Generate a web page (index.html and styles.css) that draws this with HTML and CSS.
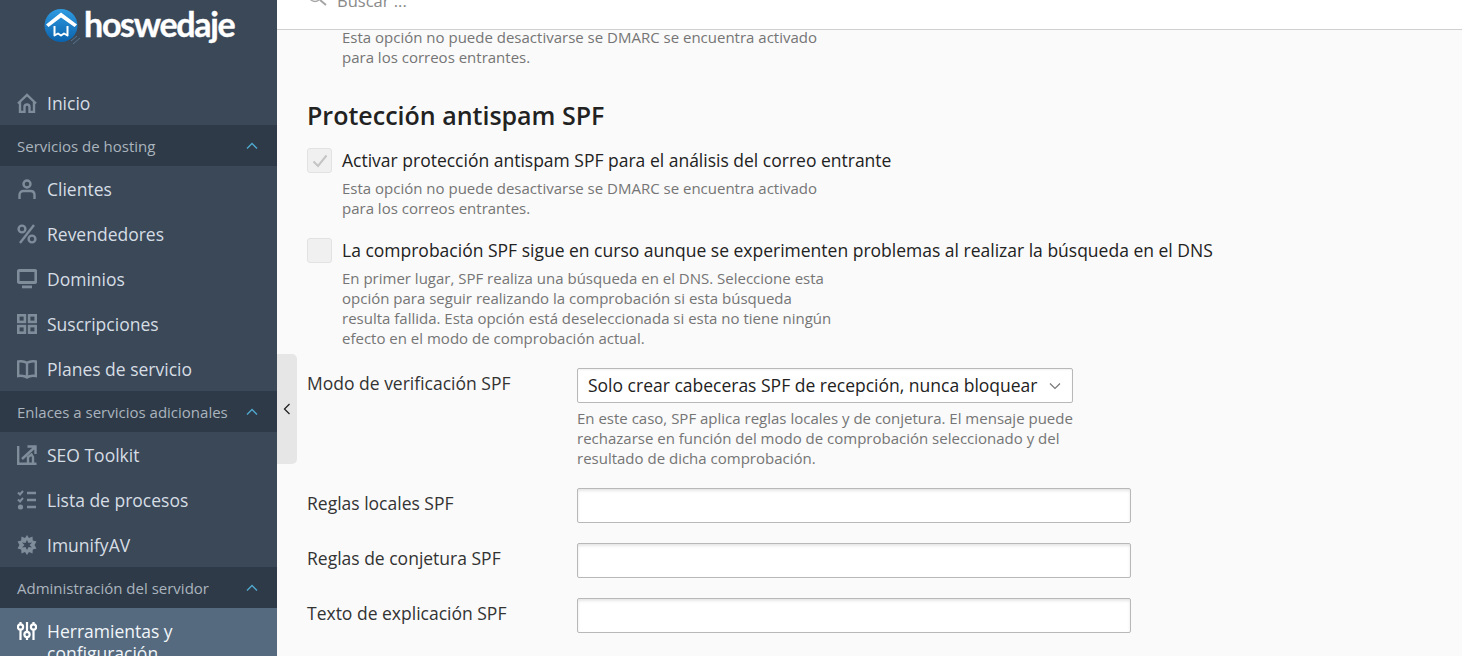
FILE: index.html
```html
<!DOCTYPE html>
<html lang="es">
<head>
  <meta charset="UTF-8" />
  <title>Protección antispam SPF - hoswedaje</title>
  <link rel="stylesheet" href="styles.css">
</head>
<body>
  <div class="container">
    <div class="sidebar">
      <div class="logo">
        <svg class="logo-mark" width="38" height="38" viewBox="0 0 38 38">
          <defs>
            <linearGradient id="logoBlue" x1="0" y1="0" x2="0" y2="1">
              <stop offset="0" stop-color="#2f9be0"/>
              <stop offset="1" stop-color="#0a62ad"/>
            </linearGradient>
          </defs>
          <circle cx="18" cy="17.5" r="16.5" fill="url(#logoBlue)"/>
          <path d="M3 16.5 L18 4.5 L34 16.5 L31.5 19 L18 9.5 L5.5 19 Z" fill="#fff"/>
          <path d="M11.5 18 V27.5 L15 25.5 L18 27.5 L21 25.5 L24.5 27.5 V18" fill="none" stroke="#fff" stroke-width="2" stroke-linejoin="round"/>
          <path d="M28 33 L34 28 M30 36 L37 30" stroke="#56748f" stroke-width="1"/>
        </svg>
        <span class="logo-text">hoswedaje</span>
      </div>
      <a href="#" class="nav-item">
        <svg viewBox="0 0 20 20" width="20" height="20"><path d="M1 10.5 L10 2 L19 10.5 M3 9 V19 H7.5 V14 A2.5 2.5 0 0 1 12.5 14 V19 H17 V9" fill="none" stroke="currentColor" stroke-width="2.4"/></svg>
        Inicio
      </a>
      <div class="nav-group">Servicios de hosting
        <svg viewBox="0 0 12 8" width="12" height="8"><path d="M1 6.5 L6 1.5 L11 6.5" fill="none" stroke="currentColor" stroke-width="1.4"/></svg>
      </div>
      <a href="#" class="nav-item">
        <svg viewBox="0 0 20 20" width="20" height="20"><circle cx="10" cy="5" r="3.5" fill="none" stroke="currentColor" stroke-width="2.4"/><path d="M2.5 20 V16 C2.5 13.5 4 12 6.5 12 H13.5 C16 12 17.5 13.5 17.5 16 V20" fill="none" stroke="currentColor" stroke-width="2.4"/></svg>
        Clientes
      </a>
      <a href="#" class="nav-item">
        <svg viewBox="0 0 20 20" width="20" height="20"><circle cx="5" cy="5" r="3.4" fill="none" stroke="currentColor" stroke-width="2.4"/><circle cx="15" cy="15" r="3.4" fill="none" stroke="currentColor" stroke-width="2.4"/><path d="M17 1 L3 19" stroke="currentColor" stroke-width="2.4"/></svg>
        Revendedores
      </a>
      <a href="#" class="nav-item">
        <svg viewBox="0 0 20 20" width="20" height="20"><rect x="1.2" y="1.5" width="17.6" height="12" rx="1" fill="none" stroke="currentColor" stroke-width="2.8"/><rect x="5" y="16.5" width="10" height="2.8" fill="currentColor"/></svg>
        Dominios
      </a>
      <a href="#" class="nav-item">
        <svg viewBox="0 0 20 20" width="20" height="20"><g fill="none" stroke="currentColor" stroke-width="2.6"><rect x="1.3" y="1.3" width="6.6" height="6.6"/><rect x="12.1" y="1.3" width="6.6" height="6.6"/><rect x="1.3" y="12.1" width="6.6" height="6.6"/><rect x="12.1" y="12.1" width="6.6" height="6.6"/></g></svg>
        Suscripciones
      </a>
      <a href="#" class="nav-item">
        <svg viewBox="0 0 20 20" width="20" height="20"><path d="M10 4 C8 2.5 4 2 1.2 2.5 V17 C4 16.5 8 17 10 18.5 C12 17 16 16.5 18.8 17 V2.5 C16 2 12 2.5 10 4 Z M10 4 V18.5" fill="none" stroke="currentColor" stroke-width="2.4"/></svg>
        Planes de servicio
      </a>
      <div class="nav-group">Enlaces a servicios adicionales
        <svg viewBox="0 0 12 8" width="12" height="8"><path d="M1 6.5 L6 1.5 L11 6.5" fill="none" stroke="currentColor" stroke-width="1.4"/></svg>
      </div>
      <a href="#" class="nav-item">
        <svg viewBox="0 0 20 20" width="20" height="20"><path d="M1.2 1 V18.8 H19.5 M5 14 L17.5 2.5 M10.5 1.5 H18.5 V9 M11 18 V12 L14.5 9.5 L16 12 V18" fill="none" stroke="currentColor" stroke-width="2.4"/></svg>
        SEO Toolkit
      </a>
      <a href="#" class="nav-item">
        <svg viewBox="0 0 20 20" width="20" height="20"><path d="M1 2.5 L3 4.5 L6 1 M1 9.5 L3 11.5 L6 8" fill="none" stroke="currentColor" stroke-width="2"/><circle cx="3.5" cy="17" r="2.6" fill="currentColor"/><path d="M10 3 H19 M10 10 H19 M10 17 H19" stroke="currentColor" stroke-width="2.4"/></svg>
        Lista de procesos
      </a>
      <a href="#" class="nav-item">
        <svg viewBox="0 0 20 20" width="20" height="20"><path d="M10 0 L12 3 L15.5 1.5 L15.8 5.5 L19.5 6.5 L17.5 10 L19.5 13.5 L15.8 14.5 L15.5 18.5 L12 17 L10 20 L8 17 L4.5 18.5 L4.2 14.5 L0.5 13.5 L2.5 10 L0.5 6.5 L4.2 5.5 L4.5 1.5 L8 3 Z" fill="currentColor"/><path d="M10 5 L11.5 8 L15 7.5 L12.5 10 L15 12.5 L11.5 12 L10 15 L8.5 12 L5 12.5 L7.5 10 L5 7.5 L8.5 8 Z" fill="#3a4858"/></svg>
        ImunifyAV
      </a>
      <div class="nav-group">Administración del servidor
        <svg viewBox="0 0 12 8" width="12" height="8"><path d="M1 6.5 L6 1.5 L11 6.5" fill="none" stroke="currentColor" stroke-width="1.4"/></svg>
      </div>
      <a href="#" class="nav-item active">
        <svg viewBox="0 0 20 20" width="20" height="20"><g fill="none" stroke="currentColor" stroke-width="2.2"><path d="M3.5 1 V3 M3.5 9 V19 M10 1 V11 M10 16.5 V19 M16.5 1 V3 M16.5 9 V19"/><circle cx="3.5" cy="6" r="2.6"/><circle cx="10" cy="13.5" r="2.6"/><circle cx="16.5" cy="6" r="2.6"/></g></svg>
        <span>Herramientas y configuración</span>
      </a>
    </div>

    <button class="collapse-tab">
      <svg viewBox="0 0 8 12" width="8" height="12"><path d="M6.5 1 L1.5 6 L6.5 11" fill="none" stroke="#222" stroke-width="1.3"/></svg>
    </button>

    <div class="main">
      <div class="topbar">
        <svg class="search-icon" viewBox="0 0 20 20" width="20" height="20"><circle cx="8" cy="6" r="6.5" fill="none" stroke="#a5a5a5" stroke-width="1.4"/><path d="M13 11 L19 16" stroke="#a5a5a5" stroke-width="2"/></svg>
        <span class="search-text">Buscar ...</span>
      </div>

      <div class="content">
        <p class="hint indent">Esta opción no puede desactivarse se DMARC se encuentra activado para los correos entrantes.</p>

        <h2>Protección antispam SPF</h2>

        <div class="check-row">
          <span class="checkbox">
            <svg viewBox="0 0 16 14" width="16" height="14"><path d="M1.5 7.5 L6 12 L14.5 1.5" fill="none" stroke="#c4c4c4" stroke-width="2"/></svg>
          </span>
          <label>Activar protección antispam SPF para el análisis del correo entrante</label>
        </div>
        <p class="hint indent">Esta opción no puede desactivarse se DMARC se encuentra activado para los correos entrantes.</p>

        <div class="check-row second">
          <span class="checkbox"></span>
          <label>La comprobación SPF sigue en curso aunque se experimenten problemas al realizar la búsqueda en el DNS</label>
        </div>
        <p class="hint indent">En primer lugar, SPF realiza una búsqueda en el DNS. Seleccione esta opción para seguir realizando la comprobación si esta búsqueda resulta fallida. Esta opción está deseleccionada si esta no tiene ningún efecto en el modo de comprobación actual.</p>

        <div class="field select-field">
          <label>Modo de verificación SPF</label>
          <div>
            <div class="select-wrap">
              <select>
                <option>Solo crear cabeceras SPF de recepción, nunca bloquear</option>
              </select>
              <svg viewBox="0 0 12 8" width="12" height="8"><path d="M1 1.5 L6 6.5 L11 1.5" fill="none" stroke="#777" stroke-width="1.2"/></svg>
            </div>
            <p class="hint">En este caso, SPF aplica reglas locales y de conjetura. El mensaje puede rechazarse en función del modo de comprobación seleccionado y del resultado de dicha comprobación.</p>
          </div>
        </div>

        <div class="field">
          <label>Reglas locales SPF</label>
          <input type="text">
        </div>
        <div class="field">
          <label>Reglas de conjetura SPF</label>
          <input type="text">
        </div>
        <div class="field">
          <label>Texto de explicación SPF</label>
          <input type="text">
        </div>
      </div>
    </div>
  </div>
</body>
</html>
```

FILE: styles.css
```css
* {
  margin: 0;
  padding: 0;
  box-sizing: border-box;
  font-family: "Open Sans", sans-serif;
}
html, body {
  height: 100%;
  overflow: hidden;
}
body {
  background: #fafafa;
  color: #222;
}
.container {
  display: flex;
  height: 656px;
  position: relative;
  overflow: hidden;
}

.sidebar {
  width: 277px;
  flex-shrink: 0;
  background: #3a4858;
  overflow: hidden;
}
.logo {
  height: 80px;
  padding: 8px 0 0 43px;
  display: flex;
  align-items: flex-start;
  gap: 3px;
}
.logo-text {
  font-family: "Lato", sans-serif;
  font-size: 34px;
  font-weight: 700;
  line-height: 32px;
  color: #fff;
  letter-spacing: -1.3px;
  -webkit-text-stroke: 0.4px #fff;
}
.nav-item {
  display: flex;
  align-items: flex-start;
  gap: 10px;
  min-height: 45px;
  padding: 12px 17px 10px;
  font-size: 17.5px;
  line-height: 22px;
  color: #d6dde4;
  text-decoration: none;
}
.nav-item svg {
  flex-shrink: 0;
  color: #7f8c9a;
  margin-top: 1px;
}
.nav-item.active {
  background: #556a7e;
  color: #f1f6fa;
}
.nav-item.active svg {
  color: #fff;
}
.nav-group {
  display: flex;
  justify-content: space-between;
  align-items: center;
  height: 41px;
  padding: 0 19px 0 17px;
  background: #2e3a47;
  color: #aab4be;
  font-size: 15px;
}
.nav-group svg {
  color: #4fa8cf;
}

.collapse-tab {
  position: absolute;
  left: 277px;
  top: 354px;
  width: 20px;
  height: 110px;
  border: none;
  border-radius: 0 5px 5px 0;
  background: #e6e6e6;
  display: flex;
  align-items: center;
  justify-content: center;
  z-index: 3;
}

.main {
  flex: 1;
  min-width: 0;
}
.topbar {
  position: relative;
  z-index: 2;
  display: flex;
  align-items: flex-end;
  gap: 10px;
  height: 30px;
  padding-left: 30px;
  background: #fff;
  border-bottom: 1px solid #d0d0d0;
  overflow: hidden;
}
.search-icon {
  margin-bottom: 20px;
}
.search-text {
  font-size: 16.5px;
  line-height: 20px;
  color: #8a8a8a;
  margin-bottom: 18px;
}
.content {
  margin-top: -3px;
  padding-left: 30px;
}
.hint {
  font-size: 15px;
  line-height: 20px;
  color: #757575;
  max-width: 498px;
}
.indent {
  margin-left: 35px;
}
h2 {
  font-size: 25px;
  font-weight: 600;
  line-height: 32px;
  color: #222;
  margin-top: 32px;
}
.check-row {
  display: flex;
  align-items: center;
  gap: 10px;
  margin-top: 17px;
  margin-bottom: 5px;
  height: 25px;
}
.check-row.second {
  margin-top: 20px;
  margin-bottom: 5px;
}
.check-row label {
  font-size: 17.5px;
  padding-bottom: 2px;
}
.checkbox {
  width: 25px;
  height: 25px;
  flex-shrink: 0;
  border: 1px solid #e2e2e2;
  border-radius: 3px;
  background: #f0f0f0;
  display: flex;
  align-items: center;
  justify-content: center;
}
.field {
  display: grid;
  grid-template-columns: 270px 1fr;
  align-items: center;
  margin-top: 20px;
}
.field label {
  font-size: 17.5px;
  color: #333;
  padding-bottom: 6px;
}
.select-field {
  align-items: start;
}
.select-field label {
  line-height: 30px;
  padding-bottom: 0;
}
.select-field .hint {
  margin-top: 5px;
}
.select-wrap {
  position: relative;
  width: 496px;
}
.select-wrap svg {
  position: absolute;
  right: 12px;
  top: 14px;
}
select, input {
  display: block;
  height: 35px;
  border: 1px solid #b8b8b8;
  border-radius: 2px;
  background: #fff;
  box-shadow: inset 0 2px 3px rgba(0, 0, 0, 0.1);
}
select {
  width: 496px;
  padding: 0 10px 2px;
  appearance: none;
  font-size: 17.5px;
  color: #222;
  box-shadow: inset 0 1px 2px rgba(0, 0, 0, 0.06);
}
input {
  width: 554px;
}
```
